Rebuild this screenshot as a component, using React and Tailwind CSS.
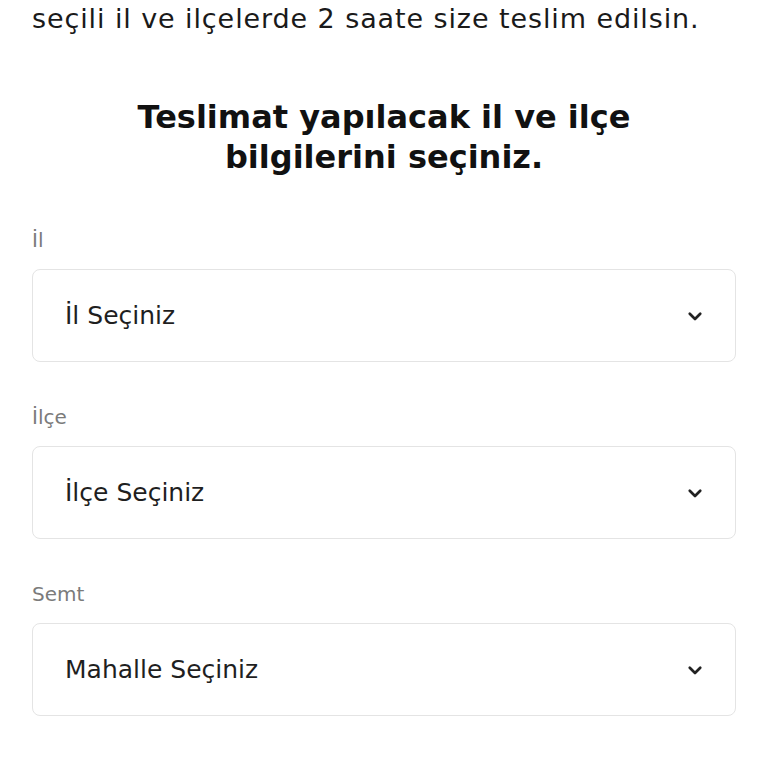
import React from "react";

const Chevron = () => (
  <svg width="18" height="18" viewBox="0 0 24 24" fill="none" stroke="#222" strokeWidth="3.6" strokeLinecap="round" strokeLinejoin="round">
    <path d="M5 9l7 7 7-7" />
  </svg>
);

const SelectBox = ({ label, placeholder }) => (
  <div className="flex flex-col">
    <label className="text-[20px] leading-[28px] text-[#7b7b7b] mb-[15px]">{label}</label>
    <div className="h-[93px] rounded-[8px] border border-[#e4e4e4] bg-white flex items-center justify-between pl-8 pr-[31px]">
      <span className="text-[25px] text-[#1f1f1f]">{placeholder}</span>
      <Chevron />
    </div>
  </div>
);

export default function App() {
  return (
    <div className="w-[768px] h-[768px] bg-white overflow-hidden px-8" style={{ fontFamily: "'DejaVu Sans', 'Noto Sans', sans-serif" }}>
      {/* intro text, top cut off by scroll */}
      <p className="text-[27px] leading-[36px] tracking-[0.9px] text-[#1a1a1a] mt-[1px] whitespace-nowrap">
        seçili il ve ilçelerde 2 saate size teslim edilsin.
      </p>

      <h2 className="mt-[60px] text-center text-[32px] leading-[40px] font-bold text-[#111] px-20">
        Teslimat yapılacak il ve ilçe bilgilerini seçiniz.
      </h2>

      <div className="mt-[49px] flex flex-col gap-[41px]">
        <SelectBox label="İl" placeholder="İl Seçiniz" />
        <SelectBox label="İlçe" placeholder="İlçe Seçiniz" />
        <SelectBox label="Semt" placeholder="Mahalle Seçiniz" />
      </div>
    </div>
  );
}
